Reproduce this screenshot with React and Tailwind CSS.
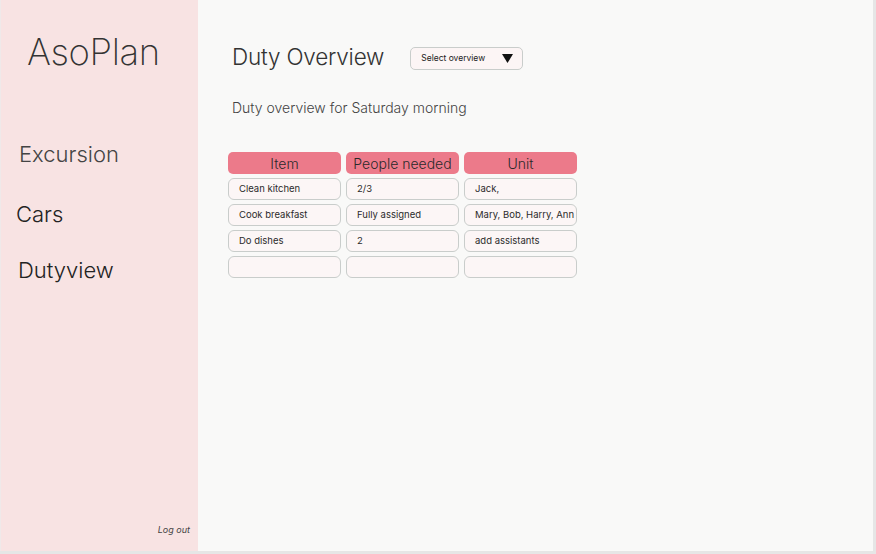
import React from 'react';

const rows = [
  ['Clean kitchen', '2/3', 'Jack,'],
  ['Cook breakfast', 'Fully assigned', 'Mary, Bob, Harry, Ann'],
  ['Do dishes', '2', 'add assistants'],
  ['', '', ''],
];

function Cell({children}) {
  return (
    <div className="h-[22px] rounded-[6px] border border-[#c9cdcb] bg-[#fcf6f6] pl-[10px] flex items-center text-[9.5px] text-[#2b2b2b] whitespace-nowrap overflow-hidden">
      {children}
    </div>
  );
}

export default function App() {
  return (
    <div
      className="w-[876px] h-[554px] flex bg-[#e6e6e6] pr-[3px] pb-[3px] text-[#2a2a2a]"
      style={{fontFamily: 'Inter, "Noto Sans", sans-serif'}}
    >
      <aside className="w-[198px] shrink-0 bg-[#f8e3e3] border-l border-[#efe9e9] flex flex-col">
        <div className="pl-[26px] pt-[34px] text-[36.5px] font-extralight tracking-[-0.4px] leading-none text-[#333]">
          AsoPlan
        </div>
        <nav className="flex flex-col mt-[72px]">
          <div className="pl-[18px] text-[22px] font-light text-[#444] leading-none">Excursion</div>
          <div className="pl-[15px] mt-[38px] text-[22px] font-light text-[#222] leading-none">Cars</div>
          <div className="pl-[17px] mt-[34px] text-[22px] font-light text-[#222] leading-none">Dutyview</div>
        </nav>
        <div className="mt-auto mb-[15px] pr-[8px] text-right text-[9px] italic text-[#444]">Log out</div>
      </aside>
      <main className="flex-1 bg-[#f9f9f8] pl-[34px] pt-[44px]">
        <div className="flex items-start">
          <h1 className="mt-[2px] text-[22.5px] font-light leading-none text-[#333] tracking-[-0.2px]">Duty Overview</h1>
          <button className="ml-[26px] mt-[3px] w-[113px] h-[23px] rounded-[5px] border border-[#c9cdcb] bg-[#fcf5f5] flex items-center justify-between pl-[10px] pr-[9px] text-[8.5px] text-[#222]">
            <span>Select overview</span>
            <svg width="11" height="9" viewBox="0 0 11 9">
              <path d="M0 0h11L5.5 9z" fill="#111" />
            </svg>
          </button>
        </div>
        <p className="mt-[27px] text-[14px] font-light text-[#444]">Duty overview for Saturday morning</p>
        <div className="mt-[34px] -ml-[4px] grid grid-cols-[113px_113px_113px] gap-x-[5px] gap-y-[4px] w-fit">
          {['Item', 'People needed', 'Unit'].map((h) => (
            <div
              key={h}
              className="h-[22px] rounded-[5px] bg-[#ec7a8a] flex items-center justify-center text-[14px] font-light text-[#2a2a2a]"
            >
              {h}
            </div>
          ))}
          {rows.map((r, i) =>
            r.map((c, j) => <Cell key={`${i}-${j}`}>{c}</Cell>)
          )}
        </div>
      </main>
    </div>
  );
}
